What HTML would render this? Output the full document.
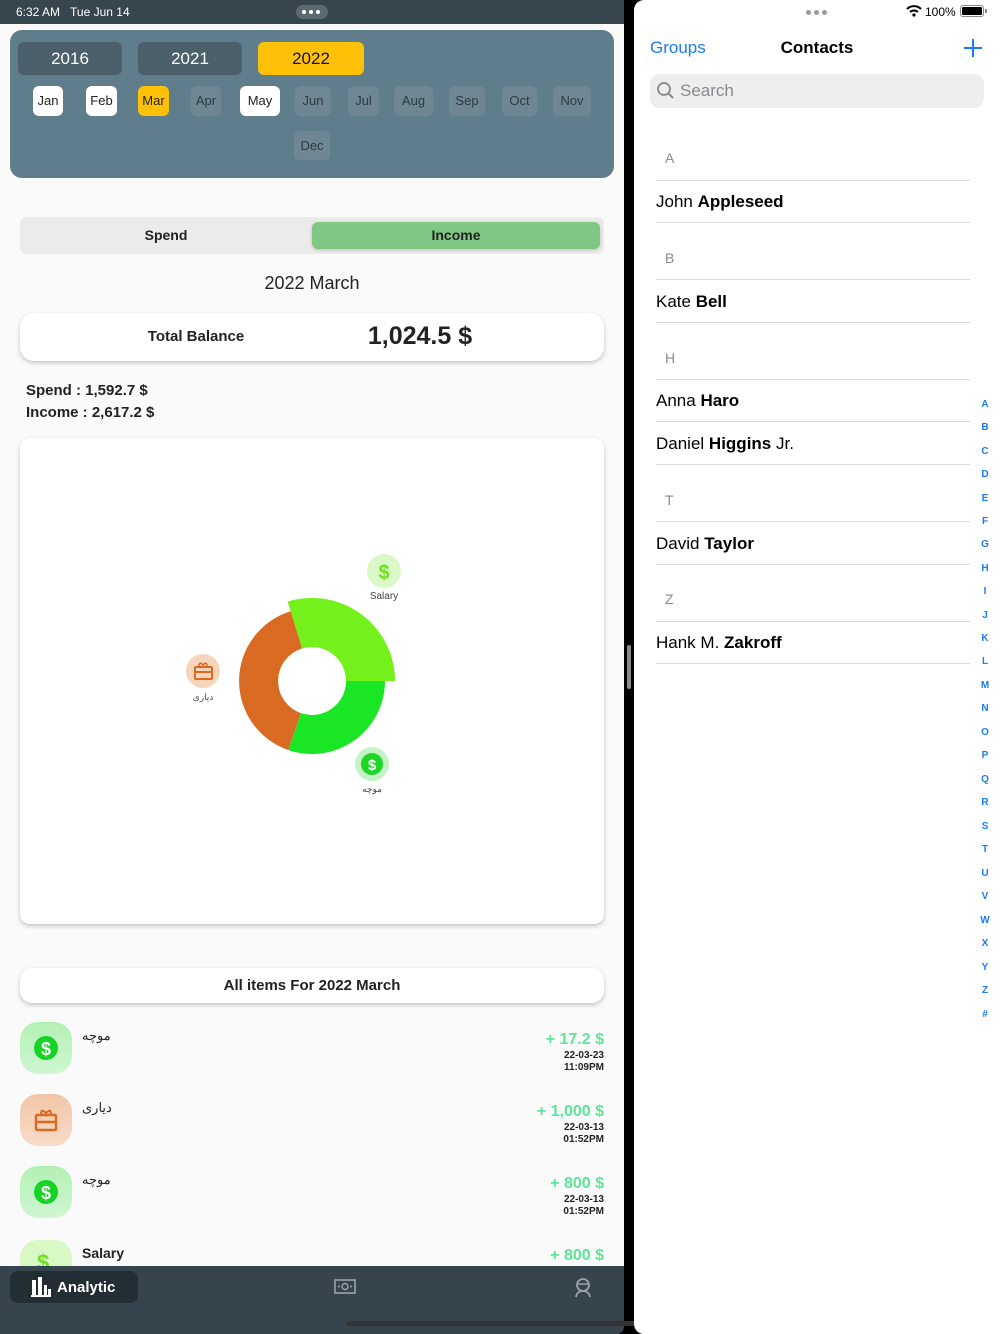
<!DOCTYPE html>
<html><head><meta charset="utf-8">
<style>
*{margin:0;padding:0;box-sizing:border-box}
body{width:1000px;height:1334px;position:relative;overflow:hidden;background:#000;font-family:"Liberation Sans","Noto Sans CJK SC",sans-serif}
.a{position:absolute}
#left{left:0;top:0;width:624px;height:1334px;background:#fafafa;overflow:hidden;border-bottom-right-radius:8px}
.yr{position:absolute;top:42px;height:33px;border-radius:6px;background:#4b606b;color:#fff;font-size:17px;text-align:center;line-height:33px}
.mo{position:absolute;height:30px;border-radius:6px;background:#6f8792;color:#2d3b42;font-size:13px;text-align:center;line-height:30px}
.mo.w{background:#fff;color:#222}
.mo.y{background:#ffc107;color:#222}
.card{position:absolute;left:20px;width:584px;background:#fff;border-radius:14px;box-shadow:0 2px 5px rgba(0,0,0,.22)}
.ic{position:absolute;left:20px;width:52px;height:52px;border-radius:18px}
.nm{position:absolute;left:82px;font-size:14px;color:#222;font-weight:bold}
.nm.ar{font-weight:normal;font-size:13px}
.amt{position:absolute;right:20px;text-align:right;color:#5fe59a;font-size:16px;font-weight:bold;line-height:16px}
.dt{display:block;color:#222;font-size:10px;line-height:12px;font-weight:bold}
#right{left:634px;top:0;width:366px;height:1334px;background:#fff;border-top-left-radius:10px;border-bottom-left-radius:10px}
.sec{position:absolute;left:31px;font-size:14px;color:#8a8a8e}
.ln{position:absolute;left:22px;width:314px;height:1px;background:#dcdcdc}
.cn{position:absolute;left:22px;font-size:17px;color:#000}
.idx{position:absolute;left:344px;width:14px;text-align:center;font-size:10px;font-weight:bold;color:#1a7cf5}
</style></head><body>
<div id="left" class="a">
  <div class="a" style="left:0;top:0;width:624px;height:24px;background:#36454e"></div>
  <div class="a" style="left:16px;top:5px;font-size:12px;color:#fff">6:32 AM&nbsp;&nbsp;&nbsp;Tue Jun 14</div>
  <div class="a" style="left:296px;top:5px;width:32px;height:14px;border-radius:7px;background:#5b6a72"></div>
  <div class="a" style="left:302px;top:10px;width:4px;height:4px;border-radius:2px;background:#fff;box-shadow:7px 0 #fff,14px 0 #fff"></div>

  <div class="a" style="left:10px;top:30px;width:604px;height:148px;background:#607d8b;border-radius:12px"></div>
  <div class="yr" style="left:18px;width:104px">2016</div>
  <div class="yr" style="left:138px;width:104px">2021</div>
  <div class="yr" style="left:258px;width:106px;background:#ffc107;color:#111">2022</div>
  <div class="mo w" style="top:86px;left:33px;width:30px">Jan</div>
  <div class="mo w" style="top:86px;left:86px;width:31px">Feb</div>
  <div class="mo y" style="top:86px;left:138px;width:31px">Mar</div>
  <div class="mo" style="top:86px;left:191px;width:30px">Apr</div>
  <div class="mo w" style="top:86px;left:240px;width:40px">May</div>
  <div class="mo" style="top:86px;left:295px;width:36px">Jun</div>
  <div class="mo" style="top:86px;left:348px;width:31px">Jul</div>
  <div class="mo" style="top:86px;left:394px;width:39px">Aug</div>
  <div class="mo" style="top:86px;left:449px;width:36px">Sep</div>
  <div class="mo" style="top:86px;left:502px;width:35px">Oct</div>
  <div class="mo" style="top:86px;left:553px;width:38px">Nov</div>
  <div class="mo" style="top:131px;left:294px;width:36px;height:29px">Dec</div>

  <div class="a" style="left:20px;top:217px;width:584px;height:37px;background:#ebebeb;border-radius:6px"></div>
  <div class="a" style="left:20px;top:227px;width:292px;text-align:center;font-size:14px;font-weight:bold;color:#222">Spend</div>
  <div class="a" style="left:312px;top:222px;width:288px;height:27px;background:#81c784;border-radius:6px;box-shadow:0 1px 3px rgba(0,0,0,.2);text-align:center;line-height:27px;font-size:14px;font-weight:bold;color:#222">Income</div>

  <div class="a" style="left:0;top:273px;width:624px;text-align:center;font-size:18px;color:#222">2022 March</div>
  <div class="card" style="top:313px;height:48px"></div>
  <div class="a" style="left:96px;top:328px;width:200px;text-align:center;font-size:15px;font-weight:bold;color:#222">Total Balance</div>
  <div class="a" style="left:320px;top:322px;width:200px;text-align:center;font-size:25px;font-weight:bold;color:#222">1,024.5 $</div>
  <div class="a" style="left:26px;top:380px;font-size:15px;font-weight:bold;color:#222;line-height:22px">Spend : 1,592.7 $<br>Income : 2,617.2 $</div>

  <div class="card" style="top:438px;height:486px;border-radius:10px"></div>
  <svg class="a" style="left:0;top:0" width="624" height="1334">
    <path d="M287.7,601.6 A83,83 0 0 1 395,681 L346,681 A34,34 0 0 0 302.1,648.5 Z" fill="#74f01a"/>
    <path d="M385,681 A73,73 0 0 1 288.2,750 L300.9,713.1 A34,34 0 0 0 346,681 Z" fill="#1be625"/>
    <path d="M288.2,750 A73,73 0 0 1 290.7,611.2 L302.1,648.5 A34,34 0 0 0 300.9,713.1 Z" fill="#d86b21"/>
    <circle cx="384" cy="571" r="17" fill="#daf8c8"/>
    <text x="384" y="579" text-anchor="middle" font-size="20" font-weight="bold" fill="#6ee01d" font-family="Liberation Sans">$</text>
    <text x="384" y="599" text-anchor="middle" font-size="10" fill="#444" font-family="Liberation Sans">Salary</text>
    <circle cx="203" cy="671" r="17" fill="#f6d5bd"/>
    <rect x="195" y="667" width="17" height="12" rx="1" fill="none" stroke="#d86b21" stroke-width="2"/>
    <line x1="195" y1="672" x2="212" y2="672" stroke="#d86b21" stroke-width="2"/>
    <path d="M199,666 q0,-5 4,-1 q4,-4 4,1" fill="none" stroke="#d86b21" stroke-width="1.6"/>
    <text x="203" y="700" text-anchor="middle" font-size="9" fill="#444" font-family="Liberation Sans,Noto Sans CJK SC,sans-serif">دیاری</text>
    <circle cx="372" cy="764" r="17" fill="#c5f3c8"/>
    <circle cx="372" cy="764" r="11" fill="#1dd628"/>
    <text x="372" y="770" text-anchor="middle" font-size="15" font-weight="bold" fill="#fff" font-family="Liberation Sans">$</text>
    <text x="372" y="792" text-anchor="middle" font-size="9" fill="#444" font-family="Liberation Sans,Noto Sans CJK SC,sans-serif">موچە</text>
  </svg>

  <div class="card" style="top:968px;height:35px;border-radius:12px;text-align:center;line-height:35px;font-size:15px;font-weight:bold;color:#222">All items For 2022 March</div>

  <div class="ic" style="top:1022px;background:linear-gradient(#b2f1b4,#cff7d2)"></div>
  <svg class="a" style="left:33px;top:1035px" width="26" height="26"><circle cx="13" cy="13" r="12" fill="#17d324"/><text x="13" y="20" text-anchor="middle" font-size="18" font-weight="bold" fill="#fff" font-family="Liberation Sans">$</text></svg>
  <div class="nm ar" style="top:1028px">موچە</div>
  <div class="amt" style="top:1032px">+ 17.2 $<span class="dt" style="margin-top:2px">22-03-23</span><span class="dt">11:09PM</span></div>

  <div class="ic" style="top:1094px;background:linear-gradient(#f1c6a7,#f7dcc8)"></div>
  <svg class="a" style="left:33px;top:1107px" width="26" height="26"><rect x="3" y="8" width="20" height="15" rx="1" fill="none" stroke="#d86b21" stroke-width="2.4"/><line x1="3" y1="15" x2="23" y2="15" stroke="#d86b21" stroke-width="2.4"/><path d="M8,7 q0,-6 5,-1 q5,-5 5,1" fill="none" stroke="#d86b21" stroke-width="2"/></svg>
  <div class="nm ar" style="top:1100px">دیاری</div>
  <div class="amt" style="top:1104px">+ 1,000 $<span class="dt" style="margin-top:2px">22-03-13</span><span class="dt">01:52PM</span></div>

  <div class="ic" style="top:1166px;background:linear-gradient(#b2f1b4,#cff7d2)"></div>
  <svg class="a" style="left:33px;top:1179px" width="26" height="26"><circle cx="13" cy="13" r="12" fill="#17d324"/><text x="13" y="20" text-anchor="middle" font-size="18" font-weight="bold" fill="#fff" font-family="Liberation Sans">$</text></svg>
  <div class="nm ar" style="top:1172px">موچە</div>
  <div class="amt" style="top:1176px">+ 800 $<span class="dt" style="margin-top:2px">22-03-13</span><span class="dt">01:52PM</span></div>

  <div class="ic" style="top:1240px;background:#d8f9c4"></div>
  <div class="a" style="left:37px;top:1250px;font-size:22px;font-weight:bold;color:#6ee01d">$</div>
  <div class="nm" style="top:1245px">Salary</div>
  <div class="amt" style="top:1248px">+ 800 $</div>

  <div class="a" style="left:0;top:1266px;width:624px;height:68px;background:#35444d"></div>
  <div class="a" style="left:10px;top:1271px;width:128px;height:32px;background:#232e34;border-radius:8px"></div>
  <svg class="a" style="left:31px;top:1277px" width="20" height="20"><rect x="1" y="3" width="4" height="17" fill="#fff"/><rect x="7" y="0" width="4" height="20" fill="#fff"/><rect x="13" y="8" width="3" height="12" fill="#fff"/><rect x="17" y="12" width="3" height="8" fill="#fff"/><rect x="0" y="18" width="20" height="2" fill="#fff"/></svg>
  <div class="a" style="left:57px;top:1279px;font-size:15px;font-weight:bold;color:#fff">Analytic</div>
  <svg class="a" style="left:334px;top:1279px" width="22" height="16"><rect x="1" y="1" width="20" height="13" fill="none" stroke="#9aa4a9" stroke-width="1.6"/><circle cx="11" cy="7.5" r="3" fill="none" stroke="#9aa4a9" stroke-width="1.4"/><circle cx="5" cy="7.5" r="1" fill="#9aa4a9"/><circle cx="17" cy="7.5" r="1" fill="#9aa4a9"/></svg>
  <svg class="a" style="left:574px;top:1278px" width="18" height="20"><circle cx="9" cy="7" r="6" fill="none" stroke="#9aa4a9" stroke-width="1.8"/><path d="M3,6 h12" stroke="#9aa4a9" stroke-width="1.6"/><path d="M2,19 q1,-6 7,-6 q6,0 7,6" fill="none" stroke="#9aa4a9" stroke-width="1.8"/></svg>
</div>

<div class="a" style="left:627px;top:645px;width:4px;height:44px;border-radius:2px;background:#8a8a90"></div>
<div class="a" style="left:346px;top:1321px;width:308px;height:5px;border-radius:3px;background:#333"></div>

<div id="right" class="a">
  <div class="a" style="left:172px;top:10px;width:5px;height:5px;border-radius:3px;background:#9a9a9e;box-shadow:8px 0 #9a9a9e,16px 0 #9a9a9e"></div>
  <svg class="a" style="left:272px;top:5px" width="16" height="12"><path d="M1,4 a10,10 0 0 1 14,0" fill="none" stroke="#000" stroke-width="2"/><path d="M4,7 a6,6 0 0 1 8,0" fill="none" stroke="#000" stroke-width="2"/><circle cx="8" cy="10" r="1.6" fill="#000"/></svg>
  <div class="a" style="left:291px;top:5px;font-size:12px;color:#000">100%</div>
  <div class="a" style="left:326px;top:5px;width:24px;height:12px;border:1px solid #888;border-radius:3px;padding:1px"><div style="width:100%;height:100%;background:#000;border-radius:1px"></div></div>
  <div class="a" style="left:351px;top:9px;width:2px;height:4px;background:#888"></div>

  <div class="a" style="left:16px;top:38px;font-size:17px;color:#1a7cf5">Groups</div>
  <div class="a" style="left:0;top:38px;width:366px;text-align:center;font-size:17px;font-weight:bold;color:#000">Contacts</div>
  <svg class="a" style="left:330px;top:39px" width="18" height="18"><path d="M9,0 V18 M0,9 H18" stroke="#1a7cf5" stroke-width="2"/></svg>
  <div class="a" style="left:16px;top:74px;width:334px;height:34px;background:#eeeeef;border-radius:10px"></div>
  <svg class="a" style="left:23px;top:82px" width="18" height="18"><circle cx="7" cy="7" r="6" fill="none" stroke="#8a8a8e" stroke-width="1.8"/><path d="M11.5,11.5 L16,16" stroke="#8a8a8e" stroke-width="2"/></svg>
  <div class="a" style="left:46px;top:81px;font-size:17px;color:#8a8a8e">Search</div>

  <div class="sec" style="top:150px">A</div>
  <div class="ln" style="top:180px"></div>
  <div class="cn" style="top:192px">John <b>Appleseed</b></div>
  <div class="ln" style="top:222px"></div>
  <div class="sec" style="top:250px">B</div>
  <div class="ln" style="top:279px"></div>
  <div class="cn" style="top:292px">Kate <b>Bell</b></div>
  <div class="ln" style="top:322px"></div>
  <div class="sec" style="top:350px">H</div>
  <div class="ln" style="top:379px"></div>
  <div class="cn" style="top:391px">Anna <b>Haro</b></div>
  <div class="ln" style="top:421px"></div>
  <div class="cn" style="top:434px">Daniel <b>Higgins</b> Jr.</div>
  <div class="ln" style="top:464px"></div>
  <div class="sec" style="top:492px">T</div>
  <div class="ln" style="top:521px"></div>
  <div class="cn" style="top:534px">David <b>Taylor</b></div>
  <div class="ln" style="top:564px"></div>
  <div class="sec" style="top:591px">Z</div>
  <div class="ln" style="top:621px"></div>
  <div class="cn" style="top:633px">Hank M. <b>Zakroff</b></div>
  <div class="ln" style="top:663px"></div>

  <div class="idx" style="top:399px">A</div><div class="idx" style="top:422px">B</div><div class="idx" style="top:446px">C</div><div class="idx" style="top:469px">D</div><div class="idx" style="top:493px">E</div><div class="idx" style="top:516px">F</div><div class="idx" style="top:539px">G</div><div class="idx" style="top:563px">H</div><div class="idx" style="top:586px">I</div><div class="idx" style="top:610px">J</div><div class="idx" style="top:633px">K</div><div class="idx" style="top:656px">L</div><div class="idx" style="top:680px">M</div><div class="idx" style="top:703px">N</div><div class="idx" style="top:727px">O</div><div class="idx" style="top:750px">P</div><div class="idx" style="top:774px">Q</div><div class="idx" style="top:797px">R</div><div class="idx" style="top:821px">S</div><div class="idx" style="top:844px">T</div><div class="idx" style="top:868px">U</div><div class="idx" style="top:891px">V</div><div class="idx" style="top:915px">W</div><div class="idx" style="top:938px">X</div><div class="idx" style="top:962px">Y</div><div class="idx" style="top:985px">Z</div><div class="idx" style="top:1009px">#</div>
</div>
</body></html>
